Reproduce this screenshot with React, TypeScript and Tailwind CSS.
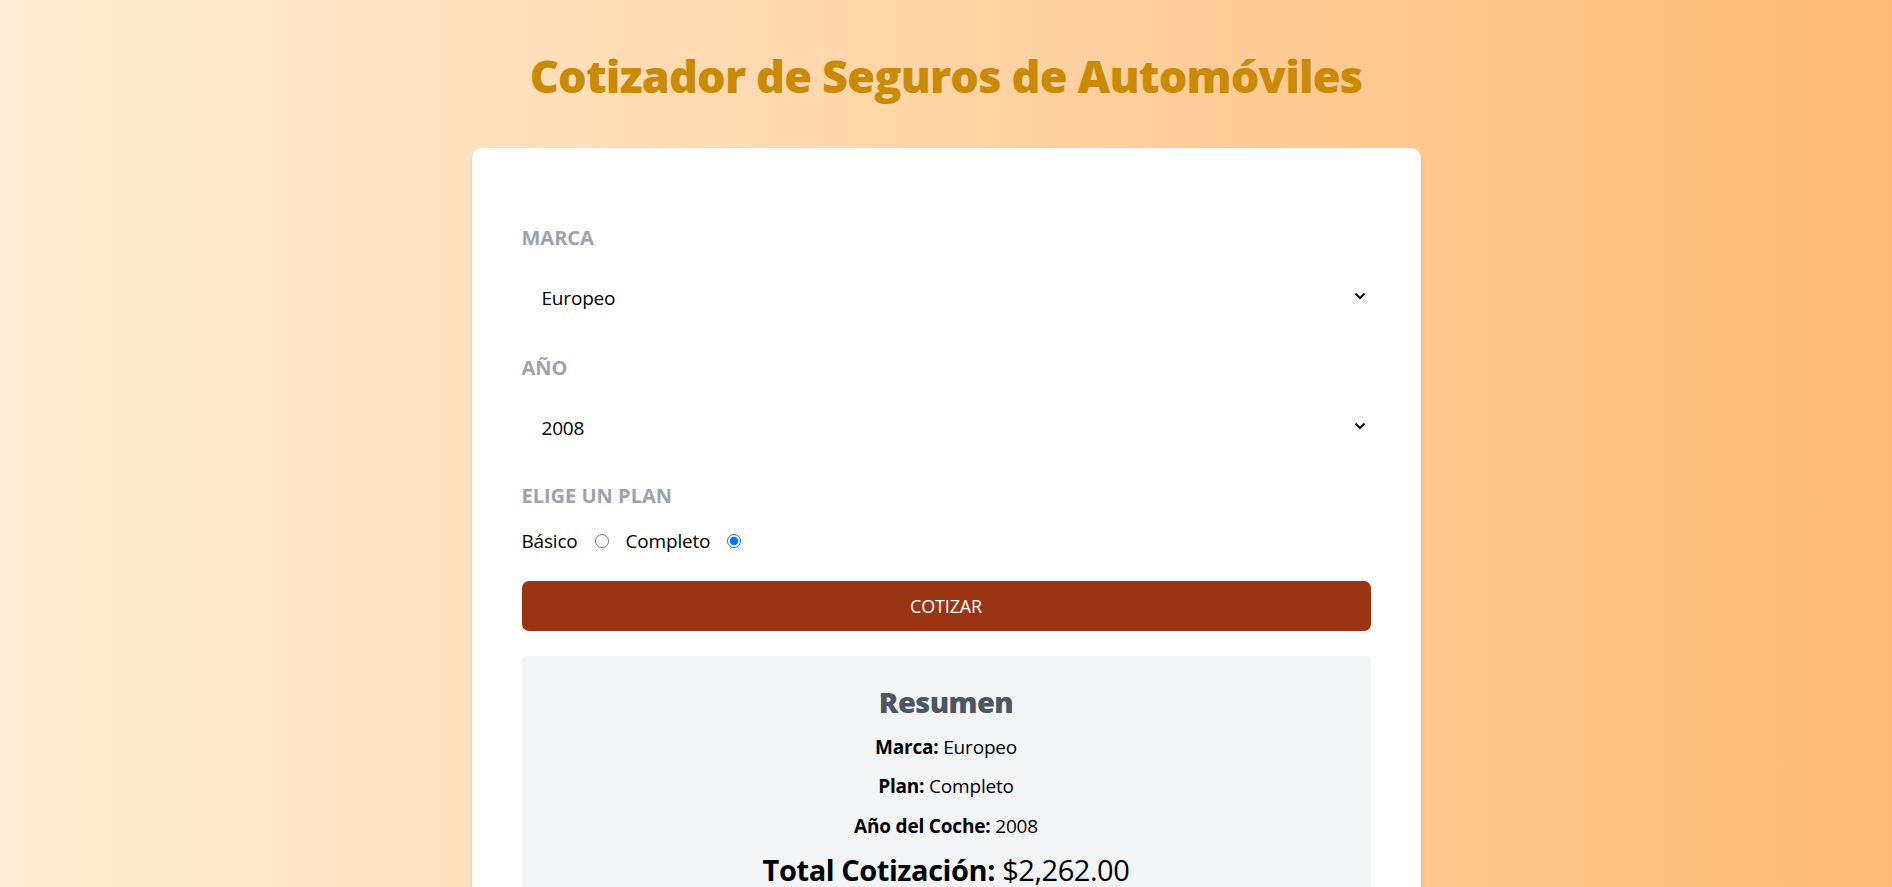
import React from "react";

function Chevron() {
  return (
    <svg
      className="pointer-events-none absolute right-[5px] top-[24px]"
      width="12"
      height="8"
      viewBox="0 0 12 8"
      fill="none"
    >
      <path d="M1.5 1.5 L6 6 L10.5 1.5" stroke="#111" strokeWidth="2" />
    </svg>
  );
}

export default function App() {
  return (
    <div className="min-h-screen bg-gradient-to-r from-[#ffedd5] to-[#fdba74] pt-[49px] pb-[40px] font-['Open_Sans',sans-serif]">
      <h1 className="text-center text-[45px] leading-[54px] font-extrabold tracking-[-0.018em] text-[#ca8a04]">
        Cotizador de Seguros de Automóviles
      </h1>
      <div className="mx-auto mt-[45px] w-[949px] rounded-[10px] bg-white px-[50px] pt-[50px] pb-[50px] shadow-md">
        <form>
          <div className="mt-[25px]">
            <label className="mb-[15px] block text-[20px] leading-[30px] font-bold uppercase text-[#9ca3af]">
              Marca
            </label>
            <div className="relative">
              <select
                defaultValue="2"
                className="block h-[60px] w-full appearance-none bg-white pl-[20px] text-[19px] tracking-[-0.01em] text-black outline-none"
              >
                <option value="">-- Seleccione --</option>
                <option value="1">Americano</option>
                <option value="2">Europeo</option>
                <option value="3">Asiático</option>
              </select>
              <Chevron />
            </div>
          </div>
          <div className="mt-[25px]">
            <label className="mb-[15px] block text-[20px] leading-[30px] font-bold uppercase text-[#9ca3af]">
              Año
            </label>
            <div className="relative">
              <select
                defaultValue="2008"
                className="block h-[60px] w-full appearance-none bg-white pl-[20px] text-[19px] tracking-[-0.01em] text-black outline-none"
              >
                <option value="2008">2008</option>
              </select>
              <Chevron />
            </div>
          </div>
          <div className="mt-[23px]">
            <label className="mb-[15px] block text-[20px] leading-[30px] font-bold uppercase text-[#9ca3af]">
              Elige un Plan
            </label>
            <div className="flex h-[30px] items-center text-[19px] tracking-[-0.01em] text-black">
              <label htmlFor="basico">Básico</label>
              <input
                id="basico"
                type="radio"
                name="plan"
                value="basico"
                className="mx-[17px] my-0 h-[14px] w-[14px]"
              />
              <label htmlFor="completo">Completo</label>
              <input
                id="completo"
                type="radio"
                name="plan"
                value="completo"
                defaultChecked
                className="mx-[17px] my-0 h-[14px] w-[14px]"
              />
            </div>
          </div>
          <button
            type="button"
            className="mt-[25px] flex h-[50px] w-full items-center justify-center rounded-[7px] bg-[#9a3412] text-[18px] tracking-[-0.01em] uppercase text-white"
          >
            Cotizar
          </button>
        </form>
        <div className="mt-[25px] flex flex-col items-center gap-[9.5px] rounded-[4px] bg-[#f3f4f6] pt-[26px] pb-[30px] text-center">
          <h2 className="text-[29px] leading-[40px] font-extrabold tracking-[-0.02em] text-[#4b5563]">
            Resumen
          </h2>
          <p className="text-[19px] leading-[30px] tracking-[-0.01em] text-black">
            <span className="font-bold">Marca: </span>Europeo
          </p>
          <p className="text-[19px] leading-[30px] tracking-[-0.01em] text-black">
            <span className="font-bold">Plan: </span>Completo
          </p>
          <p className="text-[19px] leading-[30px] tracking-[-0.01em] text-black">
            <span className="font-bold">Año del Coche: </span>2008
          </p>
          <p className="text-[29px] leading-[40px] tracking-[-0.015em] text-black">
            <span className="font-bold">Total Cotización: </span>$2,262.00
          </p>
        </div>
      </div>
    </div>
  );
}
